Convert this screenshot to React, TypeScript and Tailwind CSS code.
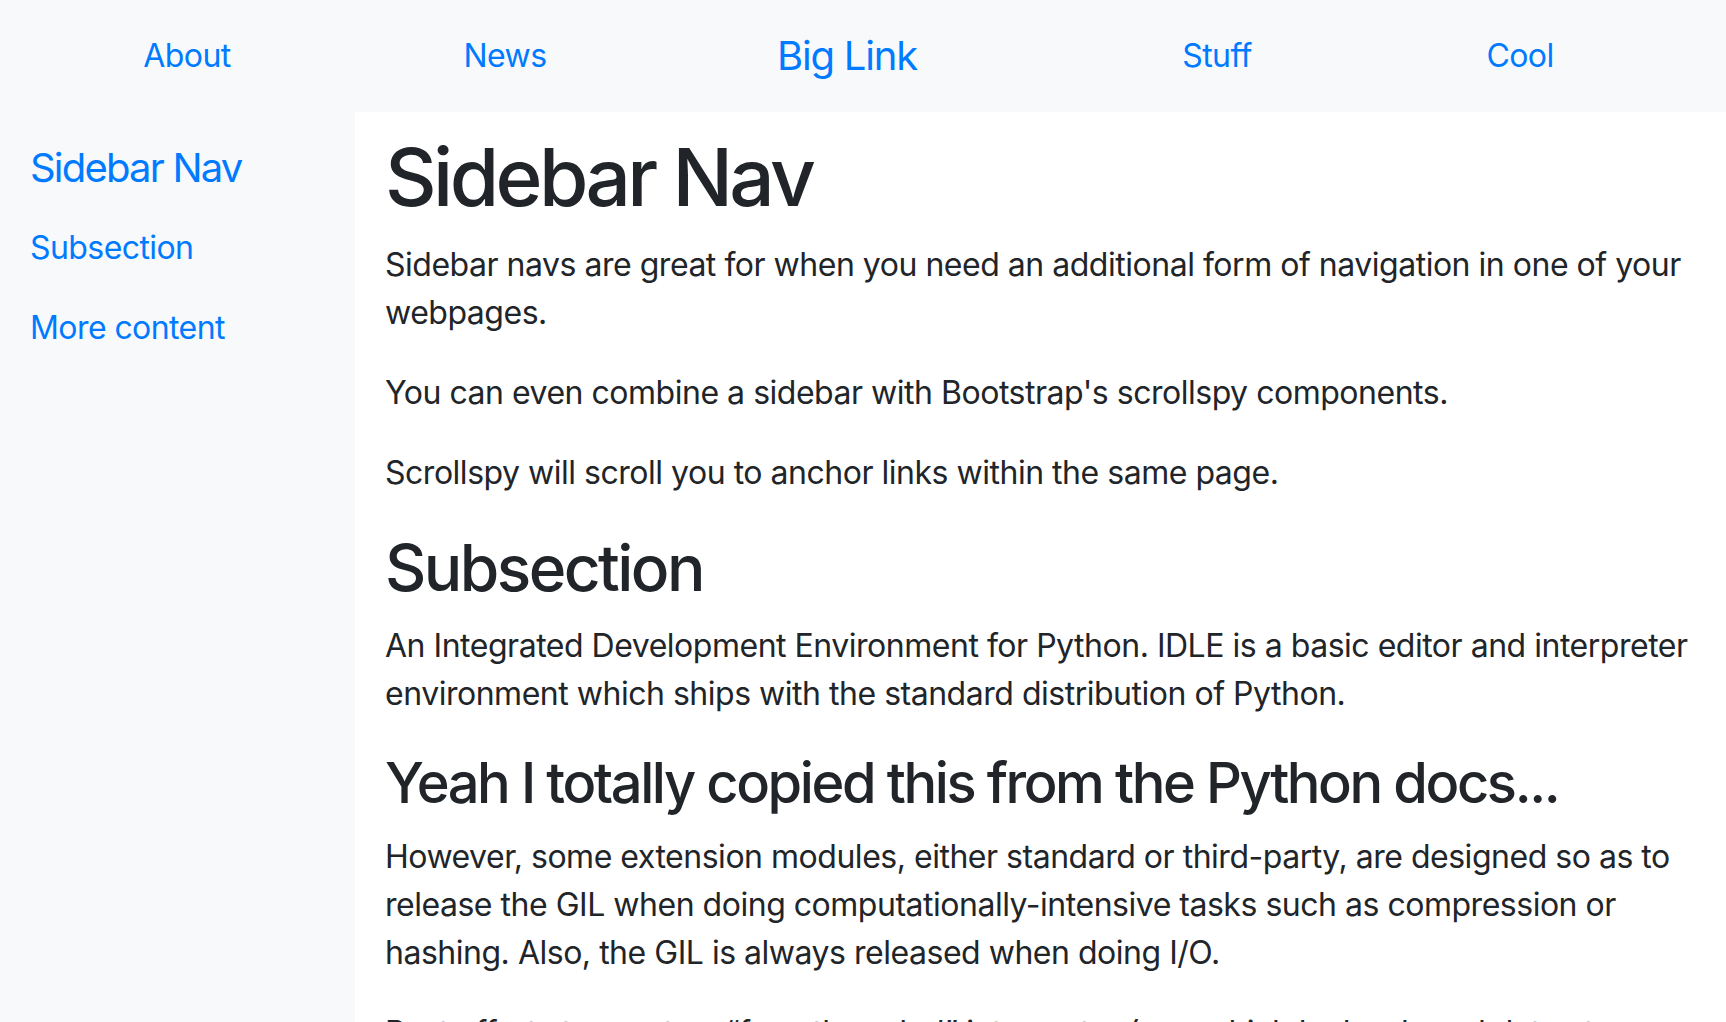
import React from "react";

export default function App() {
  const font = { fontFamily: "Inter, 'Noto Sans', sans-serif" };
  return (
    <div className="min-h-[1022px] w-[1726px] bg-white text-[#212529] tracking-[-0.03em]" style={font}>
      <nav className="grid h-[112px] grid-cols-[374px_262px_422px_318px_288px] items-center bg-[#f8f9fa] text-[#007bff]">
        <a className="text-center text-[32px] leading-[48px] tracking-[-0.018em]">About</a>
        <a className="text-center text-[32px] leading-[48px] tracking-[-0.018em]">News</a>
        <a className="text-center text-[40px] leading-[60px] tracking-[-0.03em]">Big Link</a>
        <a className="text-center text-[32px] leading-[48px] tracking-[-0.018em]">Stuff</a>
        <a className="text-center text-[32px] leading-[48px] tracking-[-0.018em]">Cool</a>
      </nav>
      <div className="flex">
        <aside className="flex min-h-[910px] w-[355px] shrink-0 flex-col bg-[#f8f9fa] px-[30px] pt-[16px] text-[#007bff]">
          <a className="flex h-[80px] items-center text-[40px] leading-[60px] tracking-[-0.045em]">Sidebar Nav</a>
          <a className="flex h-[80px] items-center text-[32px] leading-[48px] tracking-[-0.018em]">Subsection</a>
          <a className="flex h-[80px] items-center text-[32px] leading-[48px] tracking-[-0.018em]">More content</a>
        </aside>
        <main className="flex-1 px-[30px] pt-[17px] text-[32px] leading-[48px]">
          <h1 className="mb-[16px] text-[80px] font-medium leading-[96px] tracking-[-0.045em]">Sidebar Nav</h1>
          <p className="mb-[32px]">
            Sidebar navs are great for when you need an additional form of navigation in one of your webpages.
          </p>
          <p className="mb-[32px]">You can even combine a sidebar with Bootstrap's scrollspy components.</p>
          <p className="mb-[32px]">Scrollspy will scroll you to anchor links within the same page.</p>
          <h2 className="mb-[16px] text-[64px] font-medium leading-[77px] tracking-[-0.04em]">Subsection</h2>
          <p className="mb-[32px]">
            An Integrated Development Environment for Python. IDLE is a basic editor and interpreter environment which
            ships with the standard distribution of Python.
          </p>
          <h3 className="mb-[16px] text-[56px] font-medium leading-[67px] tracking-[-0.043em]">
            Yeah I totally copied this from the Python docs...
          </h3>
          <p className="mb-[32px]">
            However, some extension modules, either standard or third-party, are designed so as to release the GIL
            when doing computationally-intensive tasks such as compression or hashing. Also, the GIL is always released
            when doing I/O.
          </p>
          <p className="mb-[32px]">
            Past efforts to create a “free-threaded” interpreter (one which locks shared data at a much finer
            granularity) have not been successful because performance suffered in the common single-processor case.
          </p>
        </main>
      </div>
    </div>
  );
}
